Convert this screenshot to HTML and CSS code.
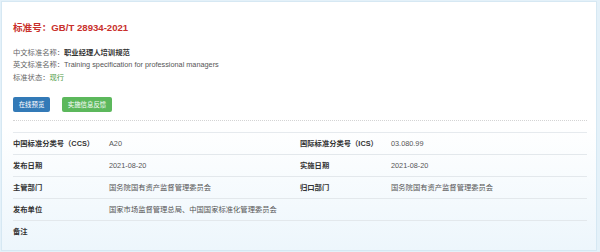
FILE: index.html
```html
<!doctype html>
<html>
<head>
    <meta charset="UTF-8">
    <title>GB/T 28934-2021</title>
    <link rel="stylesheet" href="styles.css">
</head>
<body>
    <div class="panel">
        <h1 class="std-no">标准号：GB/T 28934-2021</h1>
        <div class="info">
            <div class="info-row">中文标准名称：<b>职业经理人培训规范</b></div>
            <div class="info-row">英文标准名称：<span class="en">Training specification for professional managers</span></div>
            <div class="info-row">标准状态：<span class="status">现行</span></div>
        </div>
        <div class="actions">
            <button class="btn btn-blue">在线预览</button>
            <button class="btn btn-green">实施信息反馈</button>
        </div>
        <div class="detail">
            <div class="detail-row">
                <div class="label">中国标准分类号（CCS）</div>
                <div class="value">A20</div>
                <div class="label">国际标准分类号（ICS）</div>
                <div class="value">03.080.99</div>
            </div>
            <div class="detail-row">
                <div class="label">发布日期</div>
                <div class="value">2021-08-20</div>
                <div class="label">实施日期</div>
                <div class="value">2021-08-20</div>
            </div>
            <div class="detail-row">
                <div class="label">主管部门</div>
                <div class="value">国务院国有资产监督管理委员会</div>
                <div class="label">归口部门</div>
                <div class="value">国务院国有资产监督管理委员会</div>
            </div>
            <div class="detail-row">
                <div class="label">发布单位</div>
                <div class="value wide">国家市场监督管理总局、中国国家标准化管理委员会</div>
            </div>
            <div class="detail-row last">
                <div class="label">备注</div>
                <div class="value wide"></div>
            </div>
        </div>
    </div>
</body>
</html>
```

FILE: styles.css
```css
html, body {
    height: 100%;
}
body {
    margin: 0;
    background: #e4f1f9;
    font-family: "Liberation Sans", "Noto Sans CJK SC", sans-serif;
    font-size: 7.3px;
    color: #555;
}
.panel {
    box-sizing: border-box;
    height: 250px;
    margin: 1px 3px 0 1px;
    border: 1px solid #d6e8f3;
    padding: 18.5px 9px 0 11px;
    background: linear-gradient(to bottom, #fff 0, #fff 50%, #edf6fc 100%);
}
.std-no {
    margin: 0;
    font-size: 9.6px;
    line-height: 14px;
    font-weight: bold;
    color: #c9302c;
}
.info {
    margin-top: 12px;
}
.info-row {
    line-height: 12.6px;
    color: #666;
}
.info-row b {
    color: #333;
}
.info-row .en {
    color: #555;
}
.info-row .status {
    color: #4a9a3c;
}
.actions {
    display: flex;
    gap: 12px;
    margin-top: 12.5px;
    padding-bottom: 8px;
    border-bottom: 1px dotted #d4d4d4;
}
.btn {
    height: 15px;
    padding: 0;
    border: none;
    border-radius: 2px;
    color: #fff;
    font-family: inherit;
    font-size: 6.4px;
}
.btn-blue {
    width: 37px;
    background: #337ab7;
}
.btn-green {
    width: 50px;
    background: #5cb85c;
}
.detail {
    margin-top: 11px;
    border-top: 1px solid #e6eaee;
}
.detail-row {
    display: grid;
    grid-template-columns: 96px 191px 91px 1fr;
    align-items: center;
    height: 21px;
    border-bottom: 1px solid #e3e8ec;
}
.detail-row.last {
    border-bottom: none;
}
.label {
    font-weight: bold;
    color: #333;
}
.value {
    color: #555;
}
.value.wide {
    grid-column: 2 / 5;
}
```
